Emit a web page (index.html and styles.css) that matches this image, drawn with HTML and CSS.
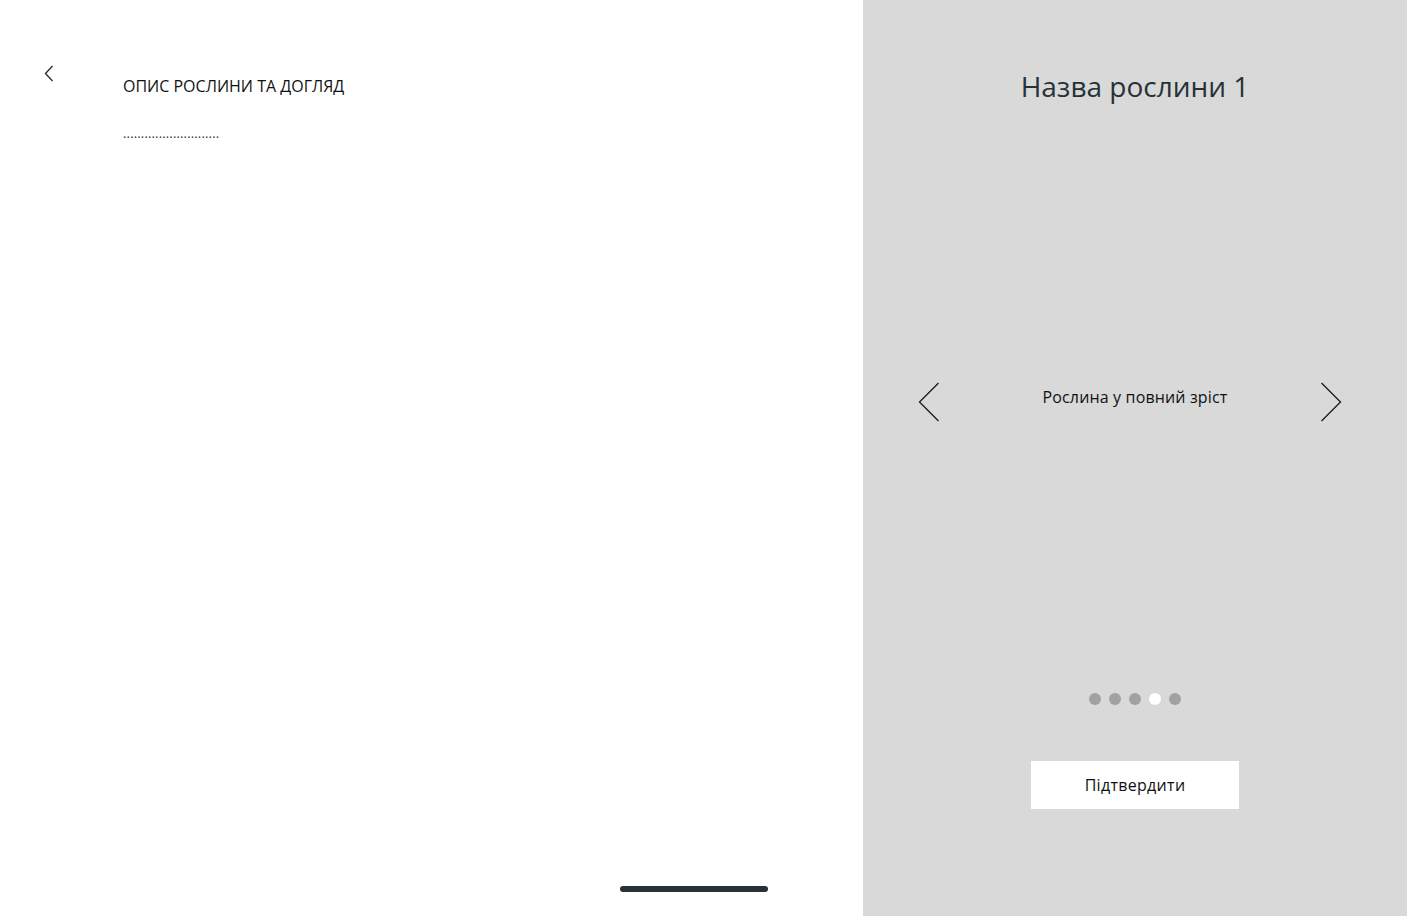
FILE: index.html
```html
<!DOCTYPE html>
<html lang="uk">
<head>
<meta charset="utf-8">
<title>Опис рослини та догляд</title>
<link rel="stylesheet" href="styles.css">
</head>
<body>
<div class="screen">
  <section class="left">
    <div class="header">
      <svg class="back" width="10" height="17" viewBox="0 0 10 17"><polyline points="8.5,1 1.5,8.5 8.5,16" fill="none" stroke="#263238" stroke-width="1.4"/></svg>
      <div class="header-text">
        <h1 class="section-title">ОПИС РОСЛИНИ ТА ДОГЛЯД</h1>
        <p class="placeholder">...........................</p>
      </div>
    </div>
    <div class="home-bar"></div>
  </section>
  <section class="right">
    <h2 class="plant-title">Назва рослини 1</h2>
    <div class="carousel">
      <svg class="arrow" width="22" height="40" viewBox="0 0 22 40"><polyline points="20.5,1 1.5,20 20.5,39" fill="none" stroke="#1a1a1a" stroke-width="1.3"/></svg>
      <div class="slide-text">Рослина у повний зріст</div>
      <svg class="arrow" width="22" height="40" viewBox="0 0 22 40"><polyline points="1.5,1 20.5,20 1.5,39" fill="none" stroke="#1a1a1a" stroke-width="1.3"/></svg>
    </div>
    <div class="dots">
      <span class="dot"></span>
      <span class="dot"></span>
      <span class="dot"></span>
      <span class="dot active"></span>
      <span class="dot"></span>
    </div>
    <button class="confirm">Підтвердити</button>
  </section>
</div>
</body>
</html>
```
FILE: styles.css
```css
* { box-sizing: border-box; }
html, body {
  margin: 0;
  padding: 0;
  width: 1407px;
  height: 916px;
  overflow: hidden;
  font-family: "Open Sans", "Noto Sans", sans-serif;
  background: #ffffff;
}
.screen {
  display: flex;
  width: 1407px;
  height: 916px;
}
.left {
  position: relative;
  width: 863px;
  height: 916px;
  background: #ffffff;
  padding: 65px 0 0 44px;
}
.header {
  display: flex;
  align-items: flex-start;
  gap: 69px;
}
.back { display: block; }
.header-text {
  padding-top: 10px;
}
.section-title {
  margin: 0;
  font-size: 16px;
  line-height: 22px;
  font-weight: 400;
  color: #111111;
}
.placeholder {
  margin: 27px 0 0;
  font-size: 13px;
  line-height: 18px;
  color: #333333;
  letter-spacing: 0.15px;
}
.home-bar {
  position: absolute;
  left: 620px;
  top: 886px;
  width: 148px;
  height: 6px;
  border-radius: 3px;
  background: #263238;
}
.right {
  width: 544px;
  height: 916px;
  background: #d9d9d9;
  display: flex;
  flex-direction: column;
  align-items: center;
}
.plant-title {
  margin: 66px 0 0;
  font-size: 28px;
  line-height: 40px;
  font-weight: 400;
  color: #263238;
}
.carousel {
  margin-top: 276px;
  width: 100%;
  display: grid;
  grid-template-columns: 22px 1fr 22px;
  align-items: start;
  padding: 0 65px 0 55px;
}
.arrow { display: block; }
.slide-text {
  text-align: center;
  padding-left: 10px;
  font-size: 16px;
  line-height: 22px;
  color: #111111;
  margin-top: 4px;
  letter-spacing: 0.15px;
}
.dots {
  margin-top: 271px;
  display: flex;
  gap: 8px;
}
.dot {
  width: 12px;
  height: 12px;
  border-radius: 50%;
  background: #a1a1a1;
}
.dot.active { background: #ffffff; }
.confirm {
  margin-top: 56px;
  width: 208px;
  height: 48px;
  border: none;
  background: #ffffff;
  font-family: "Open Sans", "Noto Sans", sans-serif;
  font-size: 16px;
  letter-spacing: 0.3px;
  color: #111111;
  padding: 0;
}
```
